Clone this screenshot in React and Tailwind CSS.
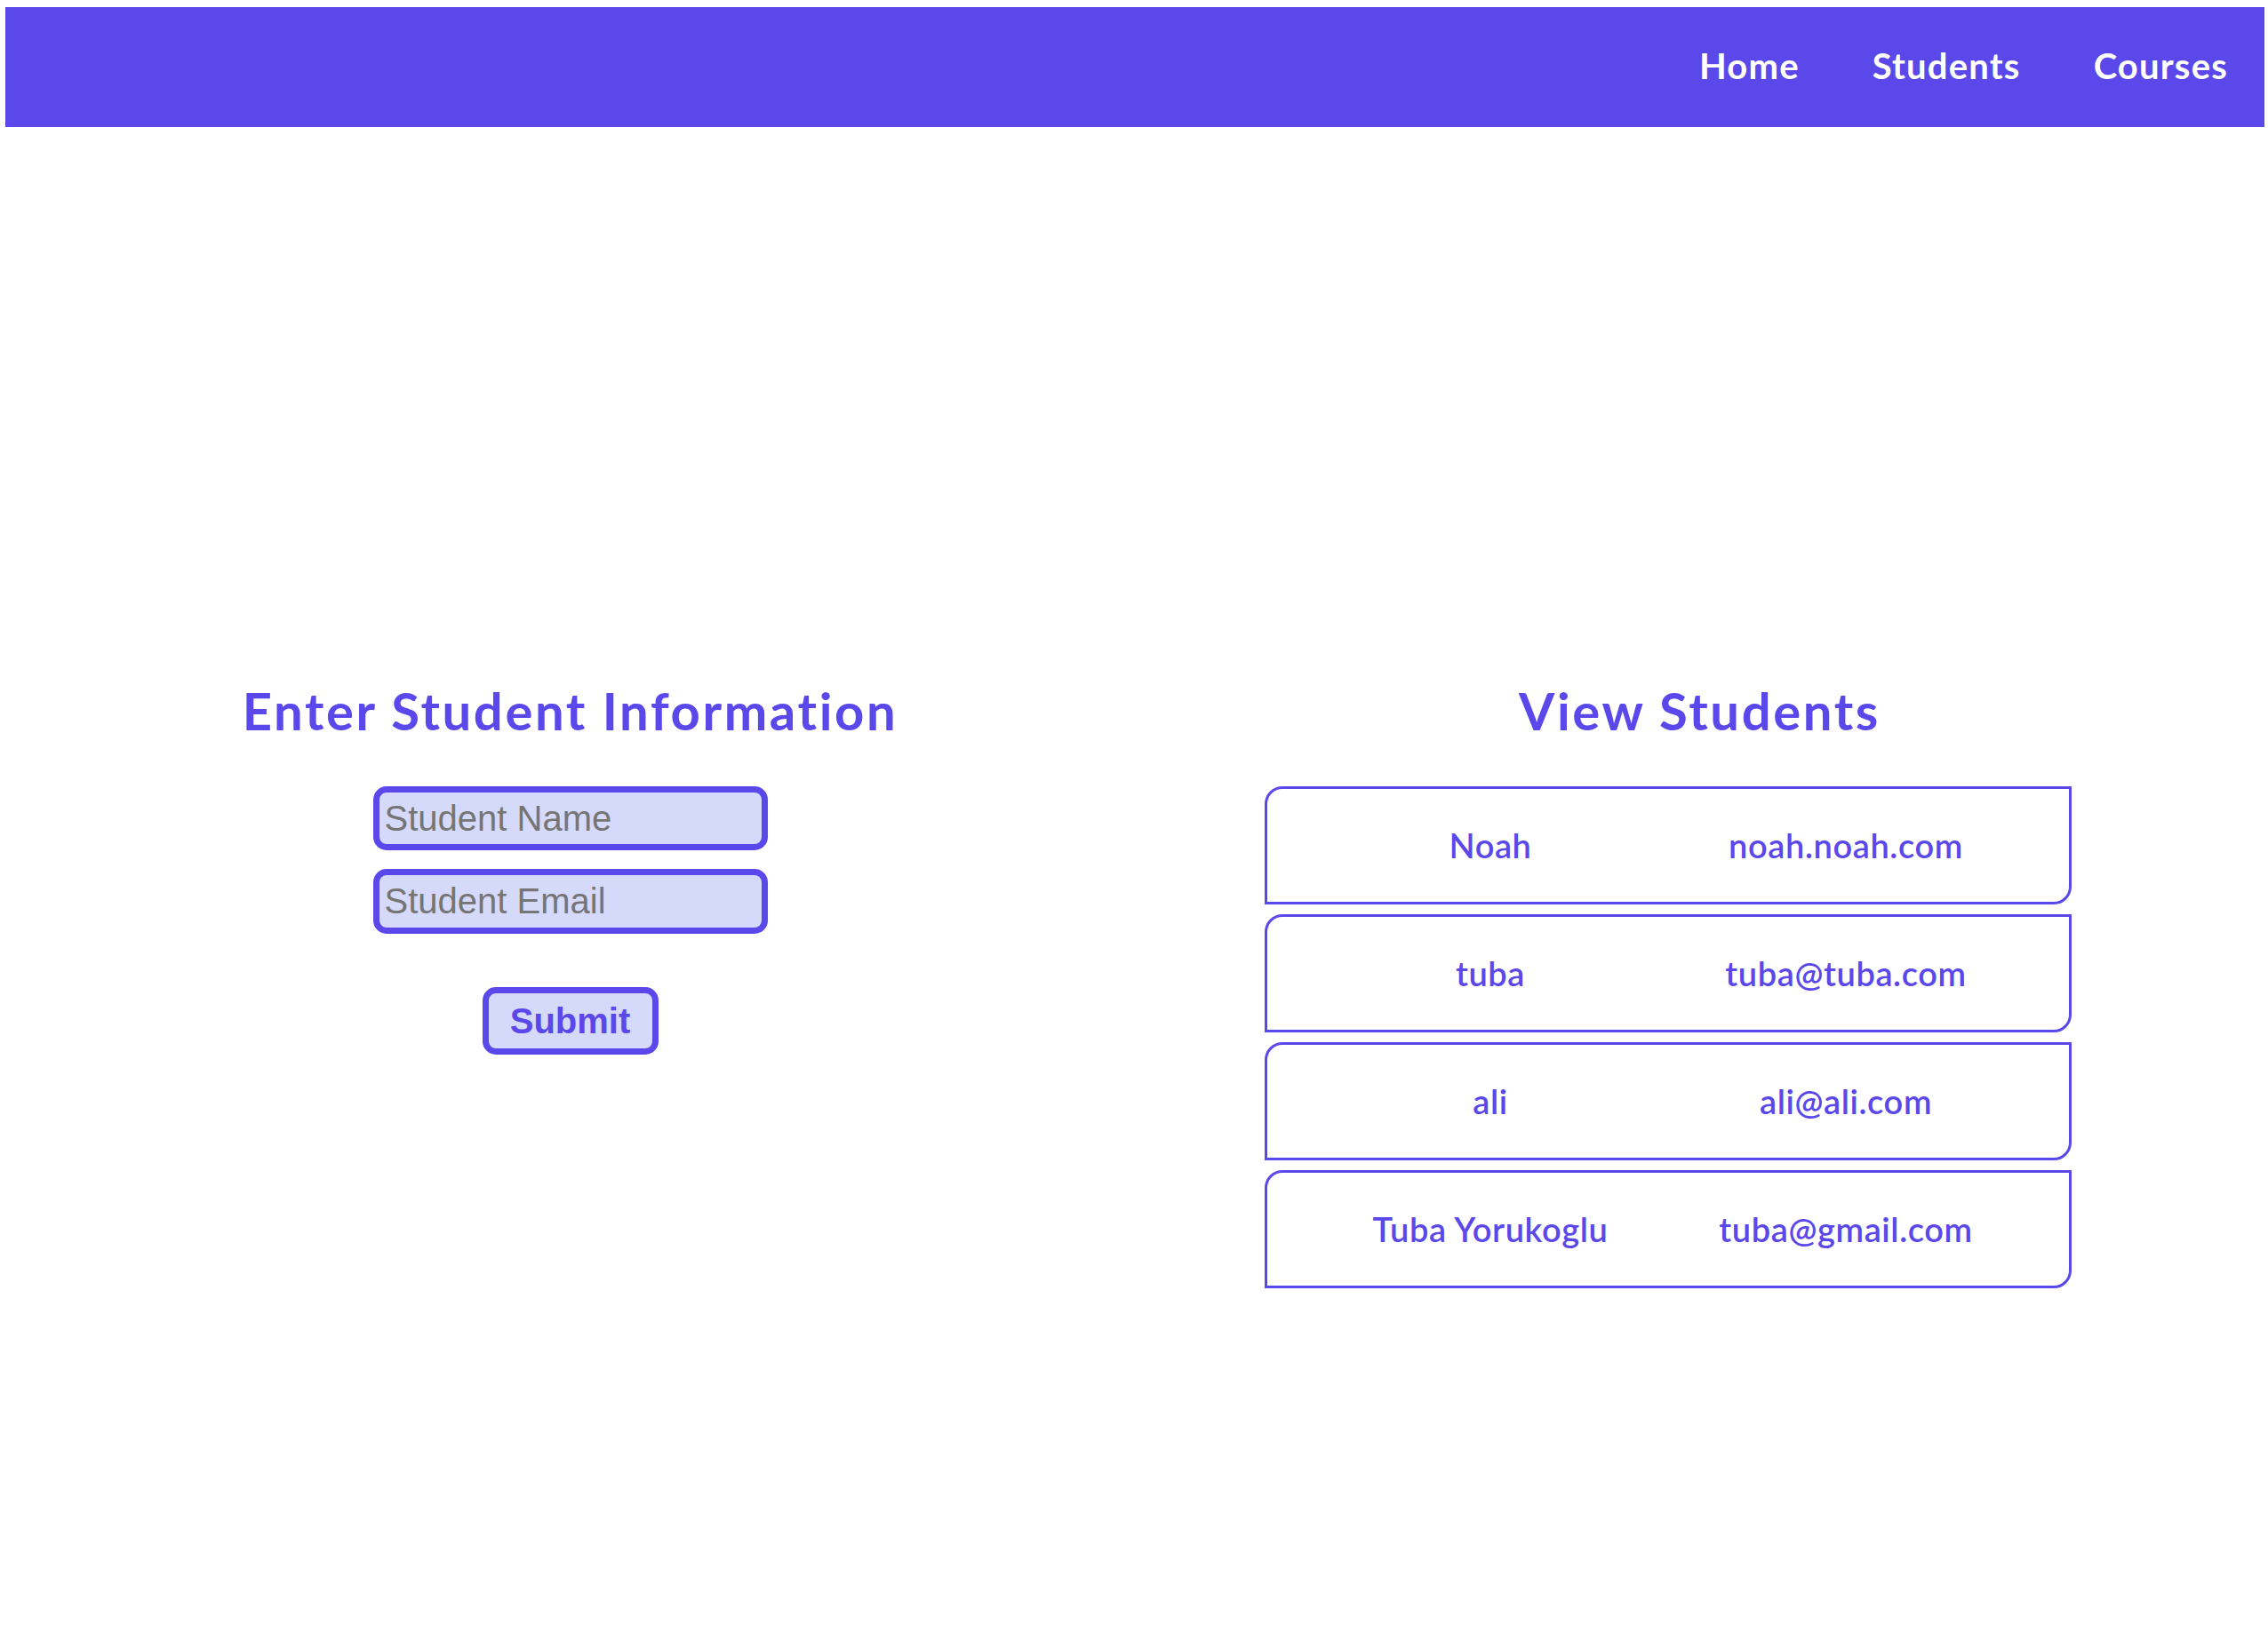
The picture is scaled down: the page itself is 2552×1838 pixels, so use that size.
import { useState } from 'react';

const students = [
    { id: 1, name: 'Noah', email: 'noah.noah.com' },
    { id: 2, name: 'tuba', email: 'tuba@tuba.com' },
    { id: 3, name: 'ali', email: 'ali@ali.com' },
    { id: 4, name: 'Tuba Yorukoglu', email: 'tuba@gmail.com' },
];

export default function App() {
    const [name, setName] = useState('');
    const [email, setEmail] = useState('');

    return (
        <div className="min-h-screen bg-white" style={{ fontFamily: 'Lato, "Open Sans", sans-serif' }}>
            {/* Navbar */}
            <nav className="ml-[6px] mr-[4px] mt-[8px] h-[135px] bg-[#5b48eb] flex items-center justify-end gap-[82px] pr-[41px] pb-[3px]">
                {['Home', 'Students', 'Courses'].map((item) => (
                    <a key={item} href="#" className="text-white text-[40px] font-bold tracking-[1.2px] leading-none">
                        {item}
                    </a>
                ))}
            </nav>

            <main className="ml-[6px] mr-[4px] mt-[628px] grid grid-cols-2">
                {/* Form */}
                <section className="flex flex-col items-center">
                    <h1 className="text-[58px] leading-none font-bold text-[#5b48eb] tracking-[2.6px]">
                        Enter Student Information
                    </h1>
                    <form
                        className="mt-[56px] flex flex-col items-center"
                        onSubmit={(e) => e.preventDefault()}
                        style={{ fontFamily: '"Liberation Sans", Arial, sans-serif' }}
                    >
                        <input
                            value={name}
                            onChange={(e) => setName(e.target.value)}
                            placeholder="Student Name"
                            className="w-[444px] h-[72px] rounded-[15px] border-[7px] border-[#5b48eb] bg-[#d5d9fa] pl-[6px] text-[40px] text-[#5b48eb] placeholder:text-[#757575] outline-none"
                        />
                        <input
                            value={email}
                            onChange={(e) => setEmail(e.target.value)}
                            placeholder="Student Email"
                            className="mt-[21px] w-[444px] h-[73px] rounded-[15px] border-[7px] border-[#5b48eb] bg-[#d5d9fa] pl-[6px] text-[40px] text-[#5b48eb] placeholder:text-[#757575] outline-none"
                        />
                        <button
                            type="submit"
                            className="mt-[60px] w-[198px] h-[76px] rounded-[15px] border-[7px] border-[#5b48eb] bg-[#d5d9fa] text-[40px] font-bold text-[#5b48eb] leading-none"
                        >
                            Submit
                        </button>
                    </form>
                </section>

                {/* Student list */}
                <section className="flex flex-col">
                    <h1 className="text-center text-[58px] leading-none font-bold text-[#5b48eb] tracking-[2.6px]">
                        View Students
                    </h1>
                    <div className="mt-[56px] ml-[146px] w-[908px] flex flex-col gap-[11px]">
                        {students.map((s) => (
                            <div
                                key={s.id}
                                className="h-[133px] border-[3px] border-[#5b48eb] rounded-tl-[20px] rounded-br-[20px] flex items-center justify-center text-[38px] font-semibold text-[#5b48eb] tracking-[0.6px]"
                            >
                                <span className="w-[400px] text-center">{s.name}</span>
                                <span className="w-[400px] text-center">{s.email}</span>
                            </div>
                        ))}
                    </div>
                </section>
            </main>
        </div>
    );
}
